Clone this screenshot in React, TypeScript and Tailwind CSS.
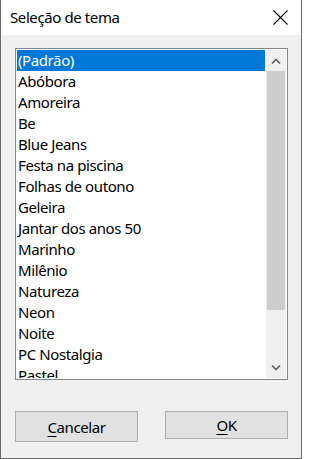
const themes = [
  '(Padrão)',
  'Abóbora',
  'Amoreira',
  'Be',
  'Blue Jeans',
  'Festa na piscina',
  'Folhas de outono',
  'Geleira',
  'Jantar dos anos 50',
  'Marinho',
  'Milênio',
  'Natureza',
  'Neon',
  'Noite',
  'PC Nostalgia',
  'Pastel',
]

export default function App() {
  return (
    <div className="w-[302px] h-[459px] flex flex-col bg-[#f0f0f0] border-x border-b border-[#6b6b6b] font-['Noto_Sans',sans-serif] tracking-[-0.4px] text-[#000] overflow-hidden">
      {/* Title bar */}
      <div className="h-[35px] bg-white flex items-center justify-between pl-[9px] pr-[13px] shrink-0">
        <span className="text-[15px] leading-none">Seleção de tema</span>
        <svg width="15" height="15" viewBox="0 0 15 15" className="text-black">
          <path d="M0.5 0.5 L14.5 14.5 M14.5 0.5 L0.5 14.5" stroke="currentColor" strokeWidth="1.1" />
        </svg>
      </div>

      {/* Body */}
      <div className="flex flex-col pl-[14px] pr-[13px] pt-[13px]">
        {/* Listbox */}
        <div className="h-[332px] border border-[#828790] bg-white p-px flex">
          <div className="flex-1 overflow-hidden">
            {themes.map((t, i) => (
              <div
                key={t}
                className={`h-[21px] pl-px flex items-center text-[15px] whitespace-nowrap ${
                  i === 0 ? 'bg-[#0078d7] text-white' : ''
                }`}
              >
                {t}
              </div>
            ))}
          </div>
          <div className="w-[20px] ml-px flex flex-col bg-[#f0f0f0]">
            <div className="h-[21px] flex items-center justify-center">
              <svg width="10" height="6" viewBox="0 0 10 6">
                <path d="M1 5.5 L5 1.5 L9 5.5" fill="none" stroke="#606060" strokeWidth="1.6" />
              </svg>
            </div>
            <div className="h-[239px] mx-px bg-[#cdcdcd]" />
            <div className="flex-1" />
            <div className="h-[21px] flex items-center justify-center">
              <svg width="10" height="6" viewBox="0 0 10 6">
                <path d="M1 0.5 L5 4.5 L9 0.5" fill="none" stroke="#606060" strokeWidth="1.6" />
              </svg>
            </div>
          </div>
        </div>

        {/* Buttons */}
        <div className="flex justify-between items-start mt-[31px]">
          <button className="w-[123px] h-[31px] bg-[#e1e1e1] border border-[#adadad] text-[15px] leading-[20px]">
            <span className="underline underline-offset-[3px] decoration-1">C</span>ancelar
          </button>
          <button className="w-[123px] h-[28px] bg-[#e1e1e1] border border-[#adadad] text-[15px] leading-[20px]">
            <span className="underline underline-offset-[3px] decoration-1">O</span>K
          </button>
        </div>
      </div>
    </div>
  )
}
